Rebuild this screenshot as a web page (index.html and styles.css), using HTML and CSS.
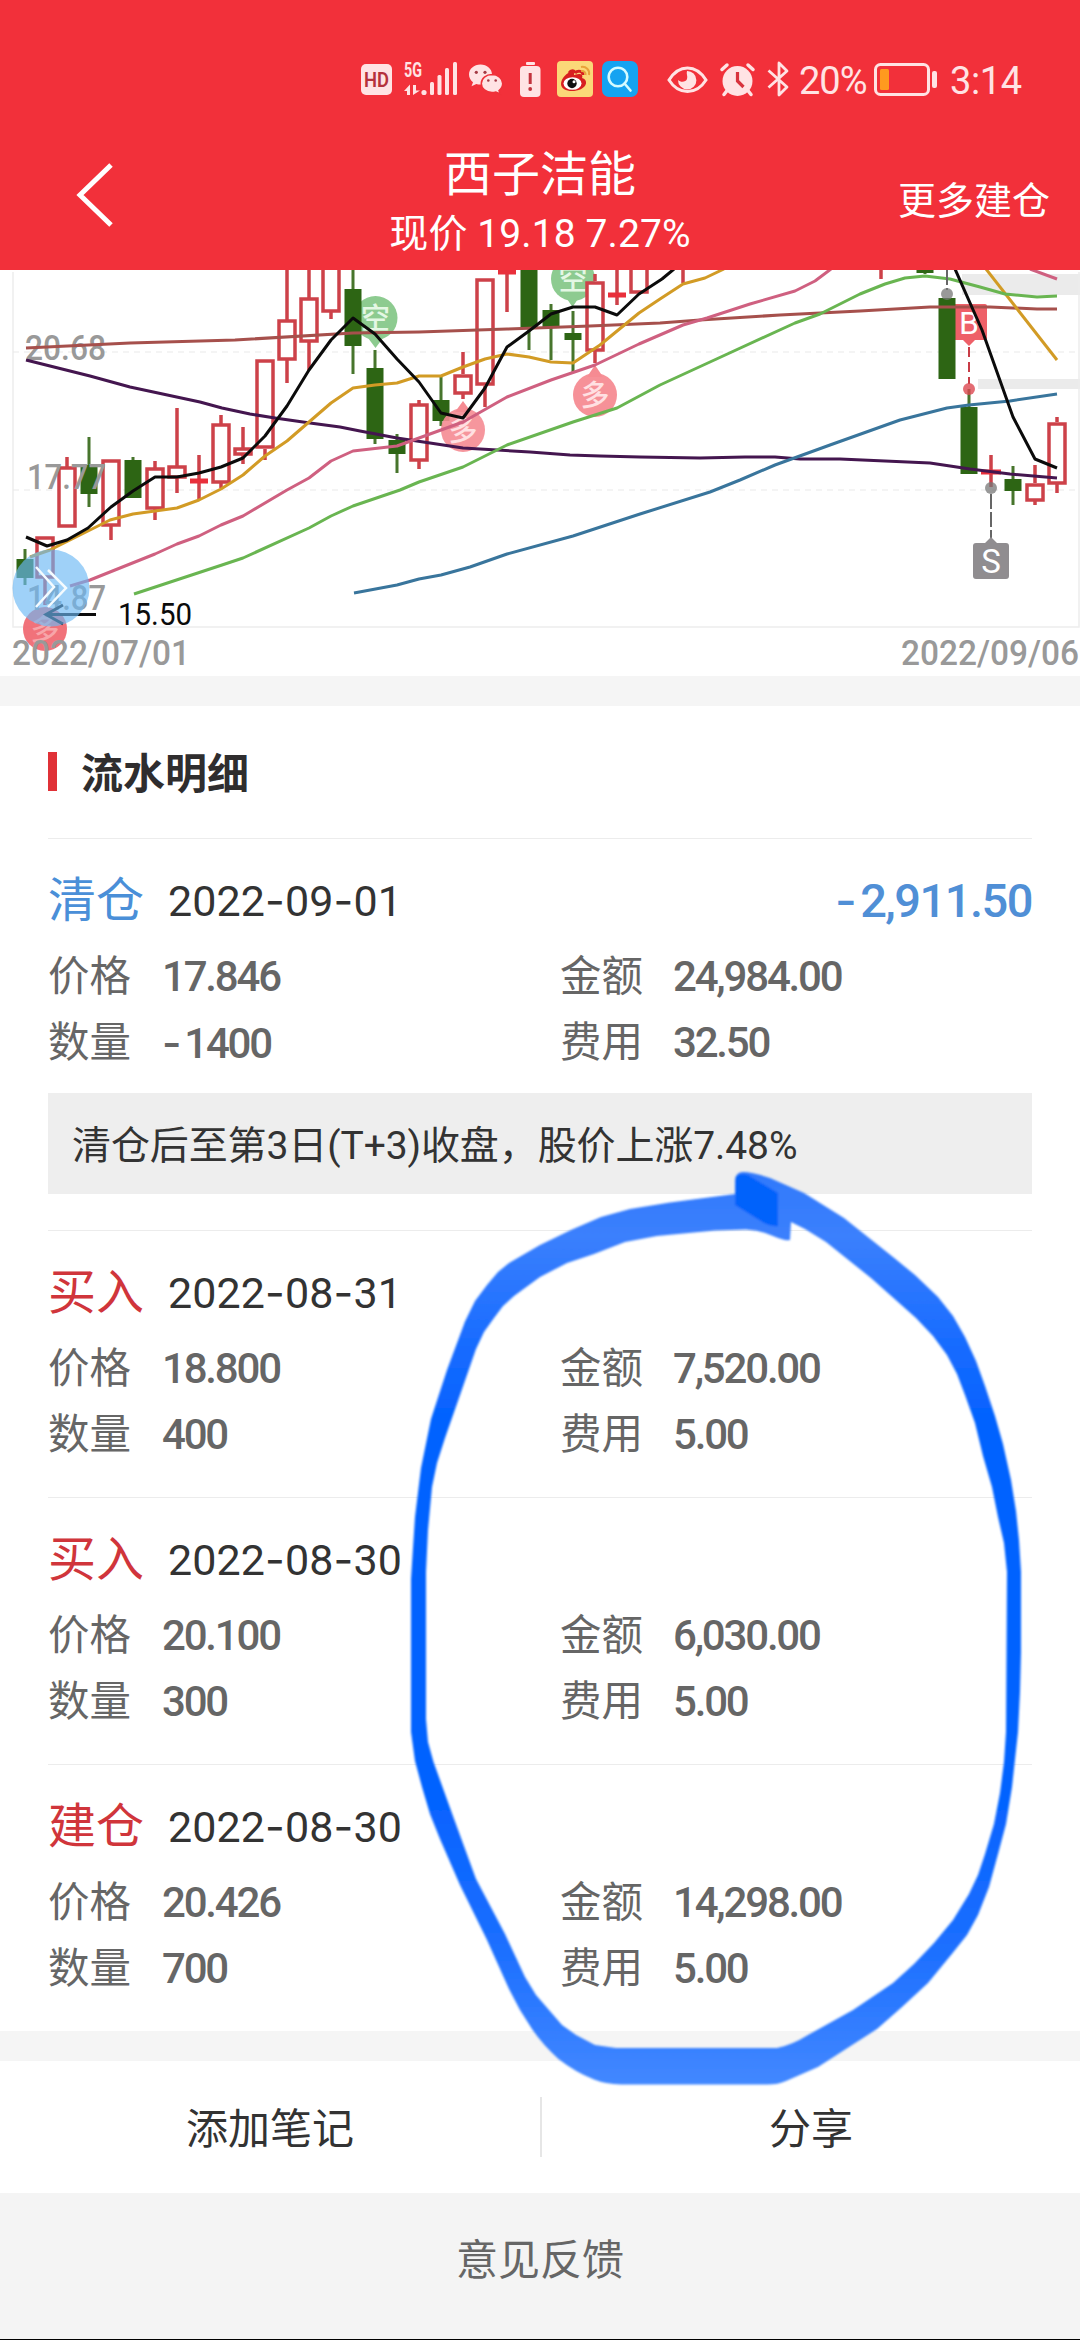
FILE: index.html
```html
<!DOCTYPE html>
<html lang="zh-CN">
<head>
<meta charset="utf-8">
<title>西子洁能</title>
<link rel="stylesheet" href="styles.css">
</head>
<body>
<div class="page">
  <header class="header">
    <div class="status">
      <svg class="st-hd" width="31" height="31" viewBox="0 0 31 31"><rect width="31" height="31" rx="5" fill="#ffe3e4"/><text x="15.5" y="23" text-anchor="middle" font-size="20" font-weight="600" textLength="25" lengthAdjust="spacingAndGlyphs" fill="#b5323c">HD</text></svg>
      <svg class="st-signal" width="54" height="34" viewBox="404 62 54 34"><text x="404" y="77" font-size="20" font-weight="700" textLength="18" lengthAdjust="spacingAndGlyphs" fill="#ffe3e4">5G</text><g fill="#ffe3e4"><path d="M404 91l6-6.500v10.500h-3v-4zM413 85v10l7-4.500h-4V85z"/><circle cx="424" cy="92.500" r="2.600"/><rect x="430" y="82" width="4" height="13" rx="1.500"/><rect x="437.500" y="75" width="4" height="20" rx="1.500"/><rect x="445" y="68" width="4" height="27" rx="1.500"/><rect x="453" y="62" width="4" height="33" rx="1.500"/></g></svg>
      <svg class="st-wechat" width="35" height="30" viewBox="468 64 35 30"><g fill="#ffe3e4"><path d="M480.500 64.500c-6.500 0-11.500 4.400-11.500 10 0 3.200 1.600 5.900 4 7.700l-1.500 4 4.800-2.300c1.300.4 2.700.7 4.200.7 6.500 0 11.500-4.500 11.500-10.100s-5-10-11.500-10z"/><path d="M492 74.500c-6 0-10.700 4-10.700 9s4.700 9.100 10.700 9.100c1.400 0 2.700-.2 3.900-.6l4.300 2-1.200-3.500c2.300-1.700 3.700-4.200 3.700-7 0-5-4.700-9-10.700-9z" stroke="#ef3039" stroke-width="1.500"/></g><g fill="#a33a44"><circle cx="476.300" cy="72.300" r="1.600"/><circle cx="485" cy="72.300" r="1.600"/><circle cx="488.300" cy="80.500" r="1.300"/><circle cx="495.700" cy="80.500" r="1.300"/></g></svg>
      <svg class="st-lowbat" width="21" height="35" viewBox="0 0 21 35"><rect x="6" width="9" height="3" rx="1" fill="#ffe3e4"/><rect y="4" width="20.500" height="31" rx="4" fill="#ffe3e4"/><path d="M10.200 11v11" stroke="#c2333d" stroke-width="3"/><circle cx="10.200" cy="27" r="1.900" fill="#c2333d"/></svg>
      <svg class="st-weibo" width="36" height="36" viewBox="0 0 36 36"><rect width="36" height="36" rx="4" fill="#fbd878"/><path d="M4 23c0-6 7-13 12-12 1.500.5 1 3 1 3s6-2.500 8 0c.8 1.500 0 3 0 3 3 .8 4.500 3 4 5.500C28 27.500 21 30 15 30S4 27.500 4 23z" fill="#d81e20"/><path d="M12 12c2-3 5-3 6 0M18 12c3-3 8-2 8 2" fill="none" stroke="#d81e20" stroke-width="3"/><ellipse cx="15.500" cy="22.500" rx="9" ry="6.300" fill="#fff"/><circle cx="15" cy="22.500" r="4.700" fill="#111"/><circle cx="17" cy="20.800" r="1.500" fill="#fff"/><path d="M24 6c5-1 9 3 8 8M24 10c3-.5 5 1.500 4.500 4" fill="none" stroke="#e9a23a" stroke-width="2"/></svg>
      <svg class="st-search" width="36" height="36" viewBox="0 0 36 36"><rect width="36" height="36" rx="7" fill="#15a3f1"/><circle cx="16" cy="16" r="9.300" fill="none" stroke="#d5fbff" stroke-width="2.600"/><path d="M22.500 22.500l6 7" stroke="#d5fbff" stroke-width="2.600" stroke-linecap="round"/></svg>
      <svg class="st-eye" width="41" height="28" viewBox="0 0 41 28"><path d="M2 14C7 6 13 2 20.500 2S34 6 39 14c-5 8-11 11.500-18.500 11.500S7 22 2 14z" fill="none" stroke="#ffe3e4" stroke-width="3"/><path d="M20 5a9.200 9.200 0 1 1-9 9c3 3 8 2 9-1s-1-5 0-8z" fill="#ffe3e4"/></svg>
      <svg class="st-alarm" width="35" height="34" viewBox="0 0 35 34"><g stroke="#ffe3e4" stroke-width="3.500" stroke-linecap="round"><path d="M2 6.500L7 2M33 6.500L28 2M7.500 27L4 31.500M27.500 27l3.500 4.500"/></g><circle cx="17.500" cy="18" r="15" fill="#ffe3e4"/><path d="M17.500 9v9l6 6" fill="none" stroke="#d8333d" stroke-width="3.200"/></svg>
      <svg class="st-bt" width="22" height="36" viewBox="0 0 22 36"><path d="M1.500 9.500L20 26l-8 8V2l8 8L1.500 26.500" fill="none" stroke="#ffe3e4" stroke-width="2.800" stroke-linejoin="round"/></svg>
      <span class="st-text st-percent">20%</span>
      <svg class="st-battery" width="63" height="34" viewBox="0 0 63 34"><rect x="1.500" y="1.500" width="53" height="30" rx="5" fill="none" stroke="#ffe3e4" stroke-width="3"/><rect x="6" y="6" width="9" height="21" rx="1.500" fill="#ff9a1f"/><rect x="58" y="8" width="5" height="17" rx="2" fill="#ffe3e4"/></svg>
      <span class="st-text st-time">3:14</span>
    </div>
    <div class="nav">
      <svg class="back" width="40" height="66" viewBox="0 0 40 66"><path d="M36 3L5 33l31 30" fill="none" stroke="#fff" stroke-width="5"/></svg>
      <div class="titles">
        <div class="title">西子洁能</div>
        <div class="subtitle">现价 19.18 7.27%</div>
      </div>
      <div class="more">更多建仓</div>
    </div>
  </header>

  <svg class="chart" width="1080" height="406" viewBox="0 270 1080 406">
    <g fill="#ebebeb"><rect x="962" y="274" width="118" height="21"/><rect x="978" y="379" width="102" height="10"/></g>
    <path d="M13 272V627H1079V272" fill="none" stroke="#ededed" stroke-width="1.500"/>
    <path d="M13 352H1079M13 490H1079" stroke="#eaeaea" stroke-width="1.200" stroke-dasharray="6 5"/>
    <g class="pin">
      <path fill="#8dcb90" d="M368 338l7.500 10 7.500-10z"/><circle cx="375.500" cy="318" r="22" fill="#8dcb90"/><text x="375.500" y="329" fill="#e4f7e4">空</text>
      <path fill="#8dcb90" d="M565 296l7.500 11 7.500-11z"/><circle cx="573" cy="279" r="22" fill="#8dcb90"/><text x="573" y="290" fill="#e4f7e4">空</text>
    </g>
    <path fill="#ee6068" d="M957 304h28q2 0 2 2v32q0 2-2 2h-10l-6 6-6-6h-10v-34q0-2 2-2z"/>
    <text x="969" y="334" font-size="32" text-anchor="middle" fill="#fff">B</text>
    <g class="up-wick">
      <path d="M45 578V605M67 457V467M111 526V540M155 461V468M155 509V520M177 408V466M177 478V493M199 455V499M221 415V424M221 483V488M243 427V448M243 455V464M265 449V460M287 268V320M287 360V383M309 268V298M309 342V370M331 312V319M419 400V404M419 461V469M463 352V374M463 394V399M485 386V407M507 273V312M595 274V281M595 351V363M617 268V305M683 268V283M881 268V279M991 455V487M1035 465V483M1035 501V505M1057 417V422M1057 484V493"/>
    </g>
    <g class="up-body">
      <rect x="37" y="538" width="16" height="39"/><rect x="59" y="468" width="16" height="58"/><rect x="103" y="461" width="16" height="64"/><rect x="147" y="469" width="16" height="39"/><rect x="169" y="467" width="16" height="10"/><rect x="213" y="425" width="16" height="57"/><rect x="235" y="449" width="16" height="5"/><rect x="257" y="361" width="16" height="86"/><rect x="279" y="321" width="16" height="38"/><rect x="301" y="299" width="16" height="42"/><rect x="323" y="260" width="16" height="51"/><rect x="411" y="405" width="16" height="55"/><rect x="455" y="376" width="16" height="17"/><rect x="477" y="280" width="16" height="104"/><rect x="587" y="283" width="16" height="67"/><rect x="631" y="260" width="16" height="32"/><rect x="1027" y="485" width="16" height="15"/><rect x="1049" y="424" width="16" height="59"/>
    </g>
    <path d="M190 481H208M498 272H516M608 295H626M981 472H1001" stroke="#e92f3b" stroke-width="5"/>
    <path d="M25 549V585M89 437V507M133 457V490M353 268V374M375 350V444M397 434V473M441 376V426M529 300V350M551 304V360M573 311V373M925 268V274M969 389V410M1013 466V505" stroke="#47752c" stroke-width="3"/>
    <path d="M25 559V578M89 465V494M133 460V498M353 289V346M375 368V439M397 440V454M441 400V421M529 260V328M551 310V328M573 333V340M925 260V273M947 298V379M969 407V474M1013 479V491" stroke="#2d6514" stroke-width="17"/>
    <g class="pin">
      <path fill="#f58b92" d="M455 412l8-11 8 11z"/><circle cx="463" cy="430" r="22" fill="#f58b92" fill-opacity=".9"/><text x="463" y="441" fill="#ffe0e2">多</text>
      <path fill="#f58b92" d="M587 377l8-12 8 12z"/><circle cx="595" cy="395" r="22" fill="#f58b92" fill-opacity=".95"/><text x="595" y="406" fill="#ffe0e2">多</text>
      <circle cx="45" cy="629" r="22" fill="#f0636c" fill-opacity=".9"/><text x="45" y="640" fill="#f7a5a9">多</text>
    </g>
    <g class="axis">
      <text x="25" y="360" textLength="81" lengthAdjust="spacingAndGlyphs">20.68</text>
      <text x="27" y="489" textLength="79" lengthAdjust="spacingAndGlyphs">17.77</text>
      <text x="27" y="610" textLength="79" lengthAdjust="spacingAndGlyphs">14.87</text>
      <text x="12" y="665" textLength="178" lengthAdjust="spacingAndGlyphs">2022/07/01</text>
      <text x="901" y="665" textLength="178" lengthAdjust="spacingAndGlyphs">2022/09/06</text>
    </g>
    <g class="ma">
      <polyline stroke="#a6504c" points="26,348 130,343 235,340 353,333 419,332 507,329 590,326 660,323 700,320 780,315 860,311 930,307 990,307 1037,309 1057,309"/>
      <polyline stroke="#44164f" points="26,360 50,366 90,376 130,387 200,402 222,408 250,414 275,418 310,423 340,427 360,431 397,438 463,448 530,452 570,455 600,456 640,457 700,458 745,457 775,457 800,459 840,459 930,463 970,469 1010,474 1057,478"/>
      <polyline stroke="#d29b25" points="30,557 50,550 88,531 110,520 133,514 177,508 199,500 221,489 243,475 265,456 287,441 309,422 331,403 353,388 375,385 397,383 419,376 441,376 463,367 485,359 507,354 529,357 551,362 573,363 600,345 639,313 660,299 683,284 705,278 724,269"/>
      <polyline stroke="#d29b25" points="986,269 1057,360"/>
      <polyline stroke="#cf6080" points="70,586 90,580 155,554 177,544 199,536 221,525 243,516 287,490 309,478 331,461 353,451 397,446 419,438 463,422 507,397 551,380 595,365 639,344 683,325 707,318 750,304 795,291 815,281 831,269"/>
      <polyline stroke="#cf6080" points="1030,269 1057,279"/>
      <polyline stroke="#69b551" points="134,594 222,565 243,558 309,528 331,516 353,506 400,490 419,482 463,467 507,445 573,422 617,408 660,385 710,362 795,323 820,314 860,294 885,284 905,278 925,276 950,279 980,287 1005,294 1037,297 1057,296"/>
      <polyline stroke="#39759c" points="354,593 397,585 419,579 441,575 470,567 507,554 573,536 640,514 710,492 740,480 775,465 830,445 900,420 947,408 969,405 1010,401 1057,394"/>
      <polyline stroke="#0b0b0b" points="26,537 47,546 67,540 88,528 111,507 133,491 155,477 177,477 199,473 221,467 243,458 265,436 287,406 309,370 331,340 353,318 375,334 397,359 419,382 441,413 463,418 485,388 507,347 529,331 551,314 573,307 595,307 617,315 639,294 662,279 674,269"/>
      <polyline stroke="#0b0b0b" points="955,269 982,330 1013,417 1035,459 1057,468"/>
    </g>
    <path d="M947 270V290M991 494V540" stroke="#666" stroke-width="2" stroke-dasharray="15 3"/>
    <path d="M969 347V384" stroke="#c83c46" stroke-width="2" stroke-dasharray="10 5"/>
    <circle cx="947" cy="294" r="6" fill="#777" fill-opacity=".75"/><circle cx="991" cy="488" r="6" fill="#777" fill-opacity=".75"/><circle cx="969" cy="389" r="6" fill="#dc4750" fill-opacity=".8"/>
    <path d="M976 543h9l6-6 6 6h9q3 0 3 3v30q0 3-3 3h-30q-3 0-3-3v-30q0-3 3-3z" fill="#908d90"/>
    <text x="991" y="573" font-size="33" text-anchor="middle" fill="#fff">S</text>
    <path d="M96 614.500H46M63 605L46 614.500 63 624" fill="none" stroke="#0b0b0b" stroke-width="3"/>
    <text x="118" y="625" font-size="31" textLength="74" lengthAdjust="spacingAndGlyphs" fill="#0b0b0b">15.50</text>
    <circle cx="51" cy="588" r="38.500" fill="#6cb9f4" fill-opacity=".65"/>
    <path d="M36 567l18 20-18 20M48 570l18 18-18 19" fill="none" stroke="#f4fbff" stroke-width="2.500"/>
  </svg>

  <main class="section">
    <h2 class="heading">流水明细</h2>

    <article class="entry">
      <div class="head"><span class="tag tag-sell">清仓</span><span class="date">2022<span class="sign">-</span>09<span class="sign">-</span>01</span><span class="profit"><span class="sign minus">-</span>2,911.50</span></div>
      <dl class="facts"><dt>价格</dt><dd>17.846</dd><dt>金额</dt><dd>24,984.00</dd><dt>数量</dt><dd><span class="sign minus">-</span>1400</dd><dt>费用</dt><dd>32.50</dd></dl>
      <p class="note">清仓后至第3日(T+3)收盘，股价上涨7.48%</p>
    </article>
    <article class="entry">
      <div class="head"><span class="tag">买入</span><span class="date">2022<span class="sign">-</span>08<span class="sign">-</span>31</span></div>
      <dl class="facts"><dt>价格</dt><dd>18.800</dd><dt>金额</dt><dd>7,520.00</dd><dt>数量</dt><dd>400</dd><dt>费用</dt><dd>5.00</dd></dl>
    </article>
    <article class="entry">
      <div class="head"><span class="tag">买入</span><span class="date">2022<span class="sign">-</span>08<span class="sign">-</span>30</span></div>
      <dl class="facts"><dt>价格</dt><dd>20.100</dd><dt>金额</dt><dd>6,030.00</dd><dt>数量</dt><dd>300</dd><dt>费用</dt><dd>5.00</dd></dl>
    </article>
    <article class="entry">
      <div class="head"><span class="tag">建仓</span><span class="date">2022<span class="sign">-</span>08<span class="sign">-</span>30</span></div>
      <dl class="facts"><dt>价格</dt><dd>20.426</dd><dt>金额</dt><dd>14,298.00</dd><dt>数量</dt><dd>700</dd><dt>费用</dt><dd>5.00</dd></dl>
    </article>
  </main>

  <div class="actions"><div class="action">添加笔记</div><div class="action">分享</div></div>
  <footer class="feedback">意见反馈</footer>

  <svg class="marker" width="1080" height="2340" viewBox="0 0 1080 2340">
    <defs>
      <linearGradient id="ink" gradientUnits="userSpaceOnUse" x1="0" y1="1172" x2="0" y2="2085">
        <stop offset="0" stop-color="#3179fb"/><stop offset=".07" stop-color="#3b80fd"/><stop offset=".18" stop-color="#1a6dff"/><stop offset=".27" stop-color="#0462ff"/><stop offset=".68" stop-color="#0462ff"/><stop offset=".85" stop-color="#1c6fff"/><stop offset="1" stop-color="#4388ff"/>
      </linearGradient>
      <filter id="soft" x="-5%" y="-5%" width="110%" height="110%"><feGaussianBlur stdDeviation="1"/></filter>
    </defs>
    <g filter="url(#soft)">
      <path fill="url(#ink)" fill-rule="evenodd" d="M735 1194L735 1180Q736 1172 743 1172Q752 1172 770 1178L804 1193L844 1218L893 1257L915 1275L938 1297L953 1316L965 1337L976 1361L985 1386L995 1416L1003 1444L1011 1480L1016 1511L1019 1540L1021 1572V1652L1020 1692L1018 1732L1012 1787L1006 1824L998 1854L989 1887L978 1915L967 1935L951 1955L928 1983L902 2007L877 2029L849 2047L818 2067L786 2081Q778 2084.500 768 2084.500H621Q605 2084 594 2079.500Q575 2072 558.500 2059Q543 2045 532 2029L520 2010L509 1989L487 1940L460 1885L440 1839L430 1814L422 1787L415 1761L411 1732V1579L415 1517L421 1468L431 1419L447 1370L465 1321.500L475 1301L487 1285L498 1272L509 1263L540 1245L572 1229.500L601 1217L630 1209L670 1202.500ZM791 1222L790 1240Q784 1241 773 1236Q760 1230 746 1229.500L715 1230.500L657 1236L625 1242L594 1254L567 1263L540 1277L514 1296L503 1306L494 1318L484 1332L476 1349L460 1395L445 1438L437 1463L432 1487L428 1530L426 1572V1719L428 1742L433.500 1762L453.500 1817.500L476 1879L505 1934L525 1977L536 1995L549 2010L562 2025L576 2035L595 2045L616 2048H777Q792 2045 808 2035L853 2010L893 1983L914 1964L934 1943L953 1920L969 1894L978 1875L985 1854L994 1824L1000 1793L1004 1762L1006 1732L1007 1572L1004 1543L998 1517L992 1487L983 1456L975 1423L965 1395L957 1374L947 1355L933 1336L916 1318L871 1278L826 1242L805 1229Z"/>
      <path fill="#0562fb" d="M736 1177Q739 1173 748 1175L778 1193V1226Q771 1227 764 1223L735 1205Z"/>
    </g>
  </svg>
</div>
</body>
</html>
```
FILE: styles.css
```css
* { box-sizing: border-box; }
body { margin: 0; background: #fff; }
.page {
  position: relative;
  width: 1080px;
  height: 2340px;
  overflow: hidden;
  display: flex;
  flex-direction: column;
  font-family: Roboto, "Noto Sans CJK SC", sans-serif;
  color: #333;
}
.page svg { display: block; flex: none; }

/* Header */
.header { height: 270px; flex: none; background: #f2303a; color: #fff; }
.status { height: 120px; display: flex; align-items: flex-start; padding: 61px 0 0 361px; }
.page .status svg { overflow: visible; }
.st-hd { margin-top: 3px; }
.st-signal { margin: 1px 0 0 12px; }
.st-wechat { margin: 3px 0 0 10px; }
.st-lowbat { margin: 1px 0 0 17px; }
.st-weibo { margin-left: 16px; }
.st-search { margin-left: 9px; }
.st-eye { margin: 5px 0 0 29px; }
.st-alarm { margin: 2px 0 0 12px; }
.st-bt { margin-left: 12px; }
.st-text { color: #ffe3e4; font-size: 38px; line-height: 40px; white-space: nowrap; }
.st-percent { width: 72px; margin-left: 10px; letter-spacing: -1px; }
.st-battery { margin: 2px 0 0 3px; }
.st-time { margin-left: 13px; letter-spacing: -.4px; }
.nav { height: 150px; display: grid; grid-template-columns: 300px 1fr 300px; }
.back { margin: 42px 0 0 75px; }
.titles { text-align: center; }
.title { font-size: 48px; line-height: 60px; margin-top: 25px; }
.subtitle { font-size: 39px; line-height: 50px; margin-top: 4px; letter-spacing: .1px; white-space: nowrap; }
.more { font-size: 38px; line-height: 50px; padding: 56px 30px 0 0; text-align: right; }

/* Price chart */
.up-wick { stroke: #cd4149; stroke-width: 3.5; fill: none; }
.up-body { stroke: #cd4149; stroke-width: 3.5; fill: #fff; }
.pin text { font-size: 29px; font-weight: 500; text-anchor: middle; }
.axis text { font-size: 34.5px; font-weight: 500; fill: #999; }
.ma { fill: none; stroke-width: 3; stroke-linejoin: round; }

/* Transaction list */
.section { border-top: 30px solid #f5f5f5; padding: 0 48px; }
.heading { position: relative; margin: 0; height: 132px; padding: 39px 0 0 33px; font-size: 42px; font-weight: 700; line-height: 60px; color: #2f2d2e; }
.heading::before { content: ""; position: absolute; left: 0; top: 46px; width: 9px; height: 39px; background: #e03137; }
.entry { height: 267px; border-top: 1px solid #ececec; padding-top: 30px; }
.entry:first-of-type { height: 392px; }
.head { display: flex; align-items: center; height: 64px; }
.tag { width: 120px; font-size: 48px; line-height: 64px; color: #d0353b; }
.tag-sell { color: #4a8fd8; }
.date { font-size: 43px; line-height: 62px; padding-bottom: 2px; letter-spacing: .1px; color: #333; }
.profit { margin-left: auto; font-size: 47px; line-height: 62px; padding-bottom: 2px; font-weight: 500; letter-spacing: -1.5px; color: #508fd6; }
.sign { font-family: Inter, sans-serif; }
.minus { margin-right: 5px; }
.facts { display: grid; grid-template-columns: 114px 398px 113px 1fr; grid-auto-rows: 66px; margin: 11px 0 0; line-height: 66px; color: #666; }
.facts dt { font-size: 41.500px; }
.facts dd { margin: 0; font-size: 42px; font-weight: 500; letter-spacing: -2.2px; white-space: nowrap; }
.note { margin: 17px 0 0; height: 101px; padding: 4px 0 0 24px; background: #eee; font-size: 39px; line-height: 99px; letter-spacing: -.1px; white-space: nowrap; color: #333; }

/* Bottom actions */
.actions { height: 162px; flex: none; border-top: 30px solid #f5f5f5; display: grid; grid-template-columns: 1fr 1fr; align-items: center; background: #fff; }
.action { height: 60px; padding-top: 3px; text-align: center; font-size: 42px; line-height: 60px; }
.action + .action { border-left: 2px solid #e6e6e6; }
.feedback { flex: 1; padding-top: 2px; border-bottom: 1px solid #000; background: #f4f4f4; text-align: center; font-size: 42px; line-height: 132px; color: #666; }

/* Freehand ring over the list */
.page .marker { position: absolute; left: 0; top: 0; pointer-events: none; }
```
